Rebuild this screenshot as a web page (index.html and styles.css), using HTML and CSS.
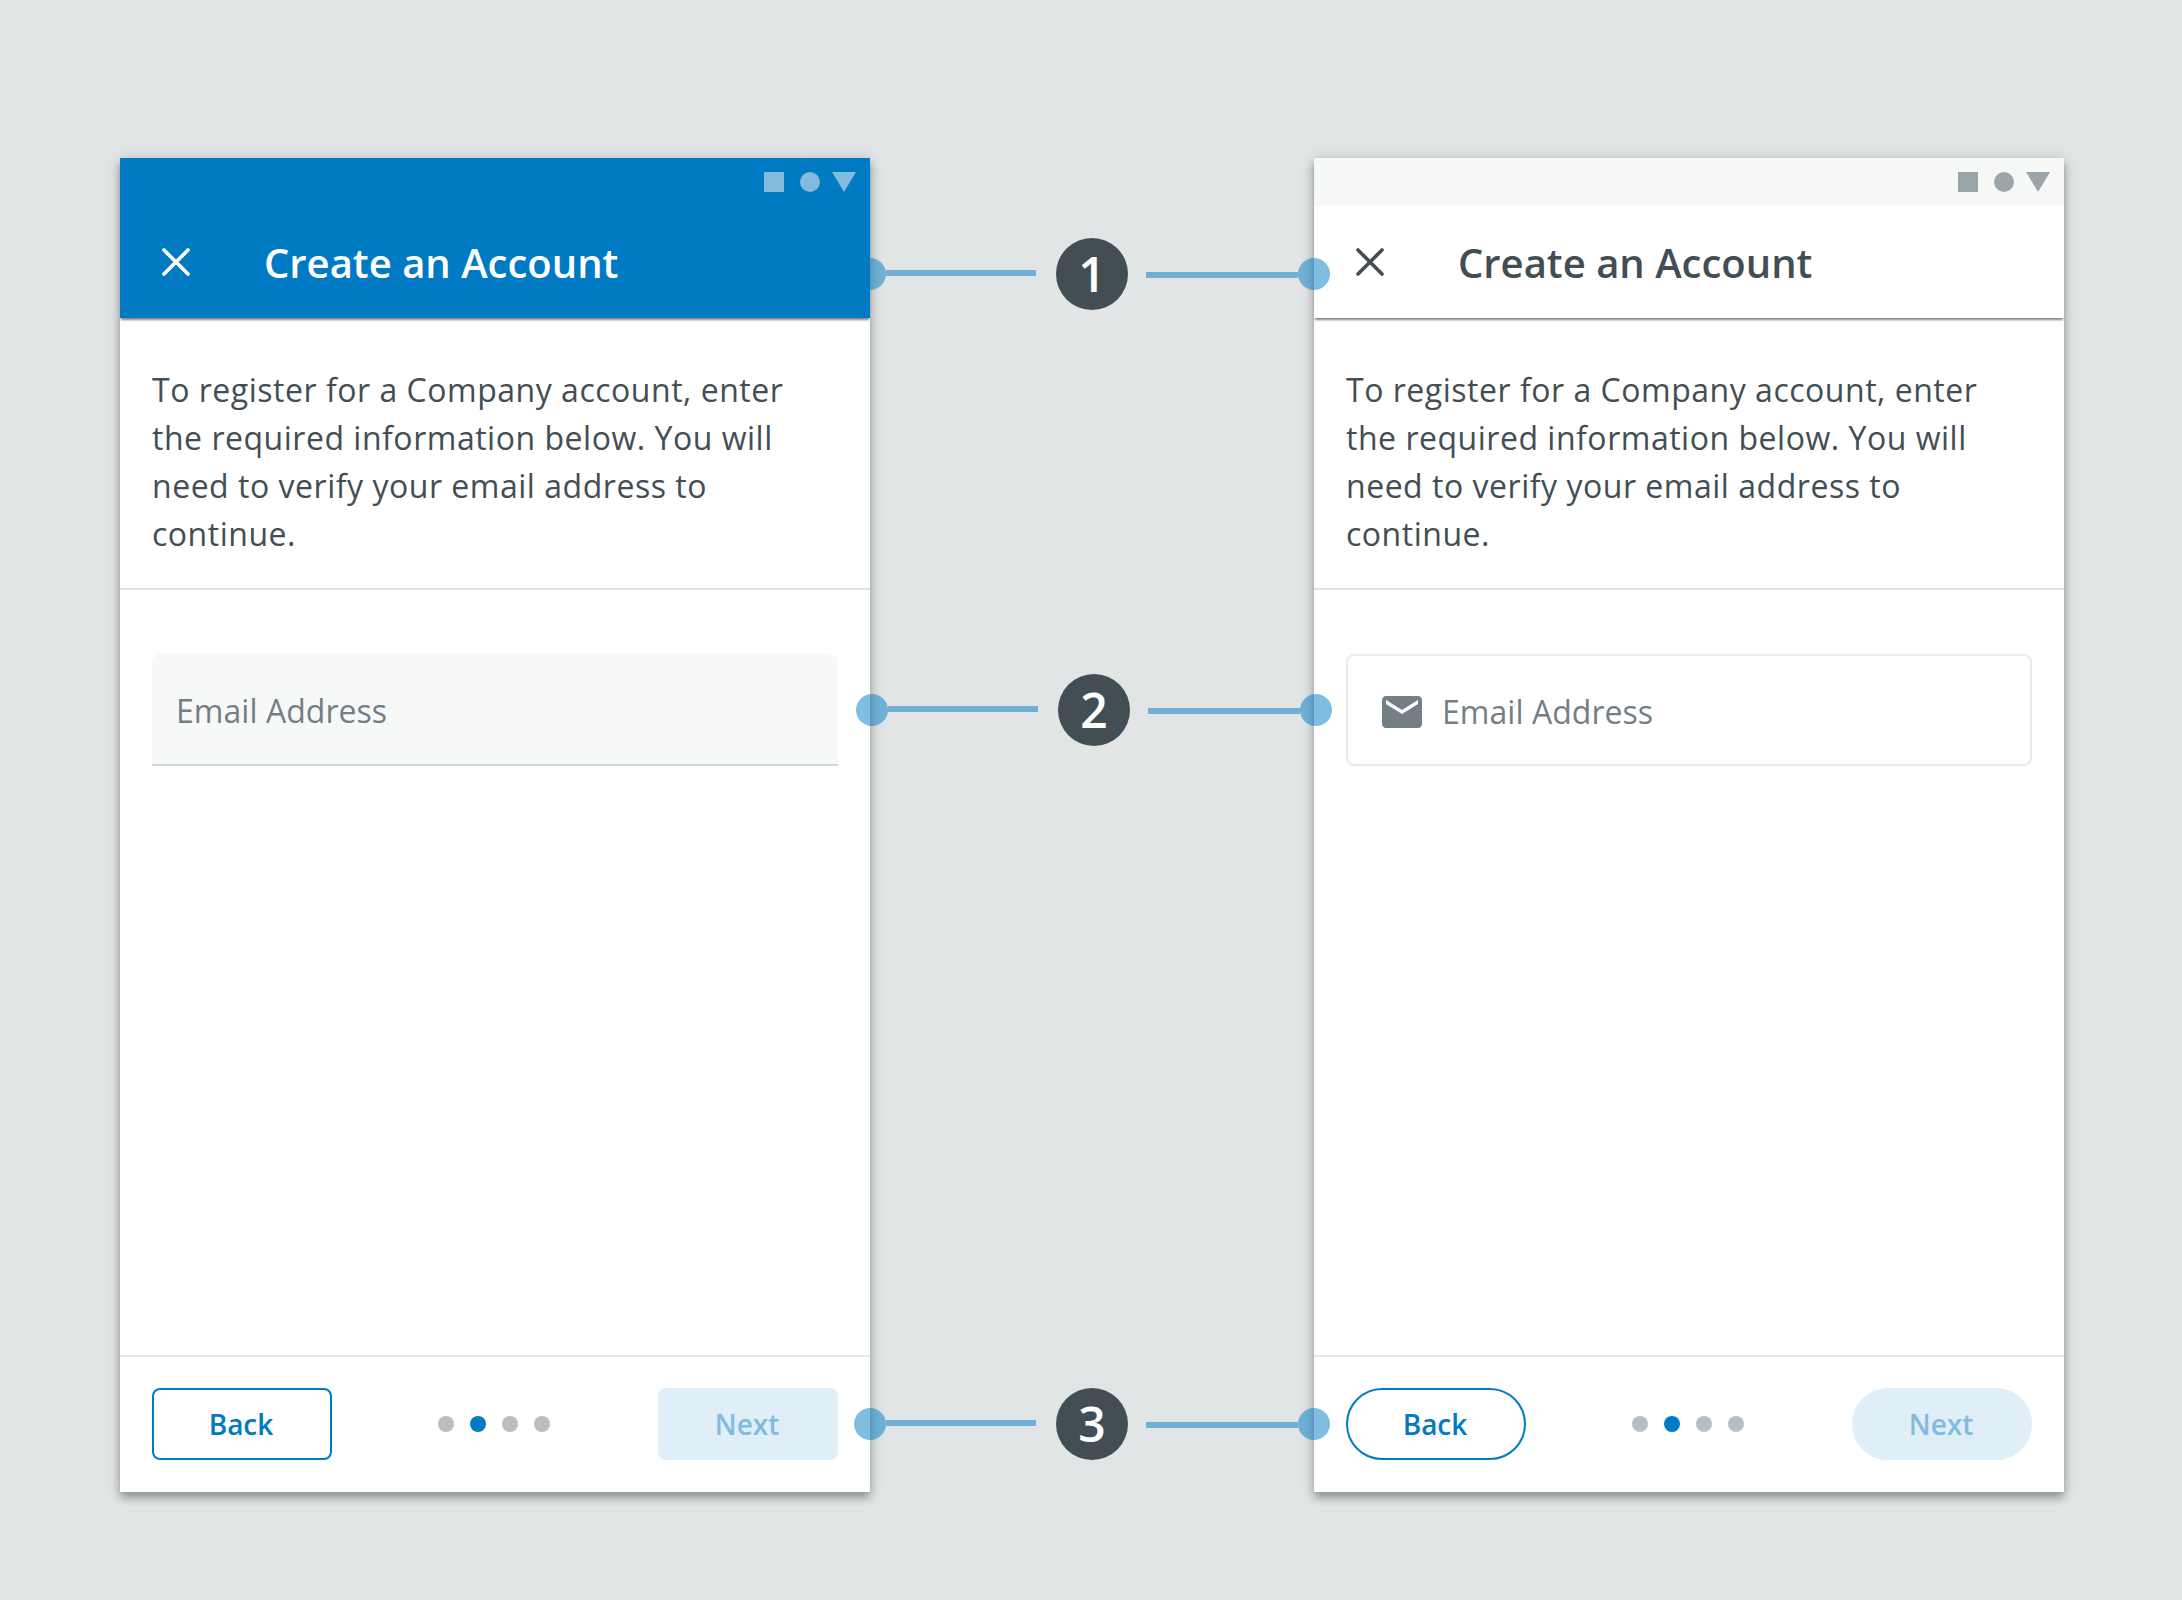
FILE: index.html
```html
<!DOCTYPE html>
<html lang="en">
<head>
<meta charset="utf-8">
<title>Create an Account</title>
<link rel="stylesheet" href="styles.css">
</head>
<body>
<main class="stage">
  <section class="phone phone--brand">
    <header class="header">
      <div class="status">
        <svg class="status-icons" viewBox="0 0 92 20"><path d="M0 0h20v20H0z"/><circle cx="46" cy="10" r="10"/><path d="M68 0h24L80 20z"/></svg>
      </div>
      <div class="appbar">
        <svg class="close" viewBox="0 0 28 28"><path d="M2 2l24 24M26 2L2 26"/></svg>
        <h1 class="title">Create an Account</h1>
      </div>
    </header>
    <p class="intro">To register for a Company account, enter the required information below. You will need to verify your email address to continue.</p>
    <div class="content">
      <div class="field field--filled"><span class="placeholder">Email Address</span></div>
    </div>
    <footer class="footer">
      <button class="button button--outline">Back</button>
      <div class="dots"><i class="dot"></i><i class="dot dot--active"></i><i class="dot"></i><i class="dot"></i></div>
      <button class="button button--disabled">Next</button>
    </footer>
  </section>

  <section class="phone phone--light">
    <header class="header">
      <div class="status">
        <svg class="status-icons" viewBox="0 0 92 20"><path d="M0 0h20v20H0z"/><circle cx="46" cy="10" r="10"/><path d="M68 0h24L80 20z"/></svg>
      </div>
      <div class="appbar">
        <svg class="close" viewBox="0 0 28 28"><path d="M2 2l24 24M26 2L2 26"/></svg>
        <h1 class="title">Create an Account</h1>
      </div>
    </header>
    <p class="intro">To register for a Company account, enter the required information below. You will need to verify your email address to continue.</p>
    <div class="content">
      <div class="field field--outlined">
        <svg class="mail" viewBox="2 4 20 16"><path d="M20 4H4c-1.1 0-1.99.9-1.99 2L2 18c0 1.1.9 2 2 2h16c1.1 0 2-.9 2-2V6c0-1.1-.9-2-2-2zm0 4l-8 5-8-5V6l8 5 8-5v2z"/></svg>
        <span class="placeholder">Email Address</span>
      </div>
    </div>
    <footer class="footer">
      <button class="button button--outline button--pill">Back</button>
      <div class="dots"><i class="dot"></i><i class="dot dot--active"></i><i class="dot"></i><i class="dot"></i></div>
      <button class="button button--disabled button--pill">Next</button>
    </footer>
  </section>

  <div class="callout callout--header">
    <i class="knob"></i><i class="line line--left"></i><b class="number">1</b><i class="line line--right"></i><i class="knob"></i>
  </div>
  <div class="callout callout--field">
    <i class="knob"></i><i class="line line--left"></i><b class="number">2</b><i class="line line--right"></i><i class="knob"></i>
  </div>
  <div class="callout callout--footer">
    <i class="knob"></i><i class="line line--left"></i><b class="number">3</b><i class="line line--right"></i><i class="knob"></i>
  </div>
</main>
</body>
</html>
```

FILE: styles.css
```css
* { box-sizing: border-box; }

body {
  margin: 0;
  background: #e1e5e5;
  color: #434e54;
  font-family: "Open Sans", sans-serif;
}

.stage {
  position: relative;
  display: flex;
  justify-content: space-between;
  width: 2182px;
  height: 1600px;
  padding: 158px 118px 108px 120px;
}

/* Phones */
.phone {
  display: flex;
  flex-direction: column;
  width: 750px;
  height: 1334px;
  background: #fff;
  box-shadow: 0 6px 8px rgba(0, 0, 0, .28), 0 1px 14px rgba(0, 0, 0, .16);
}

.header {
  height: 160px;
  box-shadow: 0 3px 2px -1px rgba(0, 0, 0, .48);
}

.phone--brand .header { background: #007bc3; color: #fff; }
.phone--light .header { background: #fff; }

.status {
  display: flex;
  justify-content: flex-end;
  height: 48px;
  padding: 14px;
}

.phone--light .status { background: #f7f9f8; }

.status-icons { width: 92px; height: 20px; fill: #81bbe0; }
.phone--light .status-icons { fill: #9ba5aa; }

.appbar {
  display: flex;
  align-items: center;
  height: 112px;
  padding-left: 42px;
}

.close {
  width: 28px;
  height: 28px;
  fill: none;
  stroke: currentColor;
  stroke-linecap: round;
  stroke-width: 3.6;
}

.title {
  margin: 1px 0 0 74px;
  font-size: 40px;
  font-weight: 600;
  line-height: 54px;
  white-space: nowrap;
}

.intro {
  height: 272px;
  margin: 0;
  padding: 48px 32px 0;
  border-bottom: 2px solid #e0e0e0;
  font-size: 32px;
  line-height: 48px;
  letter-spacing: .52px;
}

.content { flex: 1; padding: 64px 32px; }

.field {
  display: flex;
  align-items: center;
  height: 112px;
  color: #737f85;
  font-size: 32px;
  letter-spacing: .04px;
}

.field--filled {
  padding: 2px 0 0 24px;
  border-bottom: 2px solid #d1d7da;
  border-radius: 8px 8px 0 0;
  background: #f7f9f8;
}

.field--outlined {
  gap: 20px;
  padding: 4px 0 0 34px;
  border: 2px solid #ebebeb;
  border-radius: 8px;
}

.field--outlined .placeholder { margin-top: -1px; }

.mail { width: 40px; height: 32px; fill: #737f85; }

.footer {
  display: flex;
  align-items: center;
  justify-content: space-between;
  height: 137px;
  padding: 0 32px 1px;
  border-top: 2px solid #e6e8e8;
}

.button {
  width: 180px;
  height: 72px;
  padding: 0 2px 0 0;
  border: 2px solid #007bc3;
  border-radius: 8px;
  background: #fff;
  color: #007bc3;
  font: 600 28px "Open Sans", sans-serif;
}

.button--disabled { border-color: #e0eef7; background: #e0eef7; color: #81bbe0; }
.button--pill { border-radius: 36px; }

.dots { display: flex; gap: 16px; margin-right: 2px; }
.dot { width: 16px; height: 16px; border-radius: 50%; background: #b8bec2; }
.dot--active { background: #007bc3; }

/* Numbered callouts spanning both phones */
.callout {
  position: absolute;
  left: 854px;
  display: flex;
  align-items: center;
  width: 476px;
  height: 72px;
}

.callout--header { top: 238px; }
.callout--field { top: 674px; left: 856px; }
.callout--footer { top: 1388px; }

.knob { width: 32px; height: 32px; border-radius: 50%; background: rgba(0, 123, 195, .5); }
.line { height: 6px; background: rgba(0, 123, 195, .5); }
.line--left { width: 150px; margin: 0 20px 2px 0; }
.line--right { width: 152px; margin: 2px 0 0 18px; }

.number {
  width: 72px;
  height: 72px;
  border-radius: 50%;
  background: #434e54;
  color: #fff;
  font-size: 48px;
  font-weight: 600;
  line-height: 72px;
  text-align: center;
}
```
